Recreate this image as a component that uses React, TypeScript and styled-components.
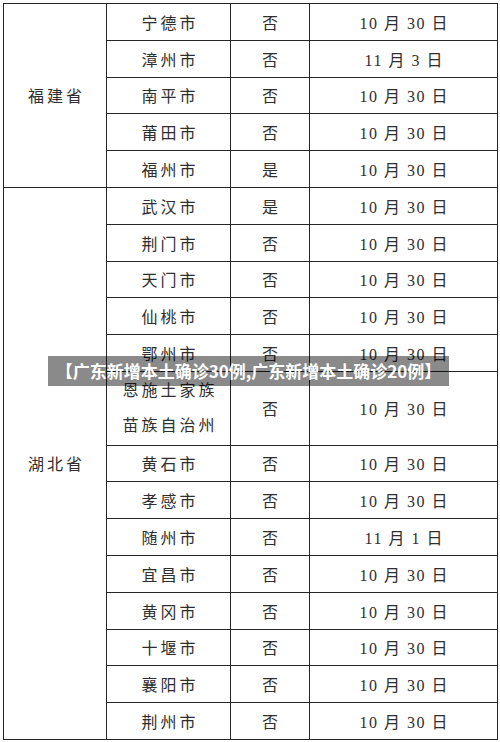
import React from "react";
import styled, { createGlobalStyle } from "styled-components";

// 표에 들어갈 지역 데이터
type Row = { city: string[]; risk: string; date: string };

const fujian: Row[] = [
  { city: ["宁德市"], risk: "否", date: "10 月 30 日" },
  { city: ["漳州市"], risk: "否", date: "11 月 3 日" },
  { city: ["南平市"], risk: "否", date: "10 月 30 日" },
  { city: ["莆田市"], risk: "否", date: "10 月 30 日" },
  { city: ["福州市"], risk: "是", date: "10 月 30 日" },
];

const hubei: Row[] = [
  { city: ["武汉市"], risk: "是", date: "10 月 30 日" },
  { city: ["荆门市"], risk: "否", date: "10 月 30 日" },
  { city: ["天门市"], risk: "否", date: "10 月 30 日" },
  { city: ["仙桃市"], risk: "否", date: "10 月 30 日" },
  { city: ["鄂州市"], risk: "否", date: "10 月 30 日" },
  { city: ["恩施土家族", "苗族自治州"], risk: "否", date: "10 月 30 日" },
  { city: ["黄石市"], risk: "否", date: "10 月 30 日" },
  { city: ["孝感市"], risk: "否", date: "10 月 30 日" },
  { city: ["随州市"], risk: "否", date: "11 月 1 日" },
  { city: ["宜昌市"], risk: "否", date: "10 月 30 日" },
  { city: ["黄冈市"], risk: "否", date: "10 月 30 日" },
  { city: ["十堰市"], risk: "否", date: "10 月 30 日" },
  { city: ["襄阳市"], risk: "否", date: "10 月 30 日" },
  { city: ["荆州市"], risk: "否", date: "10 月 30 日" },
];

const GlobalStyle = createGlobalStyle`
  body {
    margin: 0;
    background: #fff;
    font-family: "Liberation Serif", "Noto Sans CJK SC", serif;
  }
`;

const Page = styled.div`
  position: relative;
  width: 500px;
  height: 742px;
  padding: 3px 0 0 3px;
  box-sizing: border-box;
  overflow: hidden;
`;

const Table = styled.table`
  width: 494px;
  border-collapse: collapse;
  table-layout: fixed;
  color: #2e2e2e;
  font-size: 16px;
  border: 1px solid #1c1c1c;
`;

const Col = styled.col<{ $w: number }>`
  width: ${(p) => p.$w}px;
`;

// 한 줄 높이는 36.8px, 두 줄짜리 셀은 두 배
const Tr = styled.tr<{ $units: number }>`
  height: ${(p) => p.$units * 36.8}px;
`;

const Cell = styled.td<{ $spacing?: number }>`
  border: 1px solid #262626;
  padding: 0;
  text-align: center;
  vertical-align: middle;
  letter-spacing: ${(p) => p.$spacing ?? 3}px;
  text-indent: ${(p) => p.$spacing ?? 3}px;
  white-space: nowrap;
`;

const CityLine = styled.div<{ $tall?: boolean }>`
  line-height: ${(p) => (p.$tall ? "35px" : "normal")};
`;

const Banner = styled.div`
  position: absolute;
  left: 48px;
  top: 356px;
  width: 401px;
  height: 30px;
  background: rgba(0, 0, 0, 0.46);
  color: #fff;
  font-family: "Noto Sans CJK SC", sans-serif;
  font-weight: 700;
  font-size: 17px;
  line-height: 30px;
  text-align: center;
  white-space: nowrap;
`;

const renderRows = (province: string, rows: Row[]) =>
  rows.map((row, index) => {
    const units = row.city.length;
    return (
      <Tr key={province + index} $units={units}>
        {index === 0 && <Cell rowSpan={rows.length}>{province}</Cell>}
        <Cell>
          {row.city.map((line) => (
            <CityLine key={line} $tall={units > 1}>
              {line}
            </CityLine>
          ))}
        </Cell>
        <Cell $spacing={0}>{row.risk}</Cell>
        <Cell $spacing={1.5}>{row.date}</Cell>
      </Tr>
    );
  });

const App = () => {
  return (
    <>
      <GlobalStyle />
      <Page>
        <Table>
          <colgroup>
            <Col $w={103} />
            <Col $w={124} />
            <Col $w={79} />
            <Col $w={188} />
          </colgroup>
          <tbody>
            {renderRows("福建省", fujian)}
            {renderRows("湖北省", hubei)}
          </tbody>
        </Table>
        <Banner>【广东新增本土确诊30例,广东新增本土确诊20例】</Banner>
      </Page>
    </>
  );
};

export default App;
